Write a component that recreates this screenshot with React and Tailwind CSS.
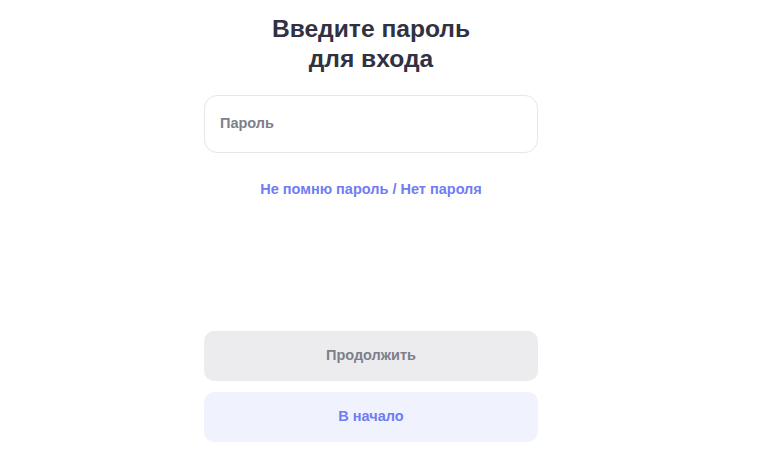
export default function App() {
  return (
    <div
      className="min-h-screen bg-white flex justify-center pr-[31px]"
      style={{ fontFamily: '"Liberation Sans", Arial, sans-serif' }}
    >
      <div className="w-[334px] flex flex-col pt-[14px]">
        <h1 className="text-center text-[24.6px] leading-[30px] font-bold text-[#303242]">
          Введите пароль
          <br />
          для входа
        </h1>

        <div className="mt-[21px] h-[58px] rounded-[13px] border border-[#e6e6ec] flex items-center px-[15px]">
          <input
            type="password"
            placeholder="Пароль"
            className="w-full outline-none text-[14.5px] font-bold text-[#303242] placeholder:text-[#7c7f8b] bg-transparent"
          />
        </div>

        <button
          type="button"
          className="mt-[26px] self-center text-[14.5px] font-bold text-[#6f7cf4]"
        >
          Не помню пароль / Нет пароля
        </button>

        <button
          type="button"
          className="mt-[130px] h-[50px] rounded-[10px] bg-[#ececee] text-[14.5px] font-bold text-[#7c7f8b]"
        >
          Продолжить
        </button>
        <button
          type="button"
          className="mt-[11px] h-[50px] rounded-[10px] bg-[#f0f3fe] text-[14.5px] font-bold text-[#6f7cf4]"
        >
          В начало
        </button>
      </div>
    </div>
  );
}
